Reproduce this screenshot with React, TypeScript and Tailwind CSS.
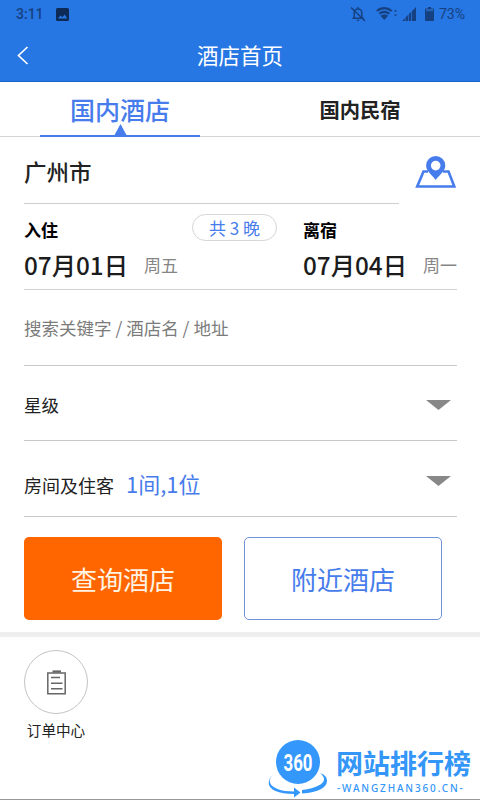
import React, { useState } from 'react';

const StatusBar: React.FC = () => (
  <div className="flex h-7 items-center pl-4 pr-[15px] text-[#164180]">
    <span className="w-[40px] font-[Roboto] text-[14px] font-medium leading-7">3:11</span>
    <svg className="h-[13px] w-[13px]" viewBox="0 0 13 13">
      <rect width="13" height="13" rx="1.5" fill="#0c2a55" />
      <path d="M2 10.5 4.5 7.5 6.3 9.3 8.7 6.5 11.2 10.5Z" fill="#2676e3" />
    </svg>
    <div className="flex-1" />
    <svg className="mr-[10px] h-4 w-4" viewBox="0 0 16 16" fill="none" stroke="currentColor" strokeWidth="1.5">
      <path d="M4.2 12V6.8a3.8 3.8 0 0 1 7.6 0V12M2.5 12.2h11.2M8 1v2" />
      <path d="M1 1.5 15 15" />
      <path d="M6.6 13.8h2.8a1.4 1.4 0 0 1-2.8 0Z" fill="currentColor" stroke="none" />
    </svg>
    <svg className="mr-[4px] h-4 w-[22px]" viewBox="0 0 22 16" fill="none" stroke="currentColor">
      <path d="M.9 5a11 11 0 0 1 14.8 0M3.3 7.8a7.5 7.5 0 0 1 10 0" strokeWidth="2.1" />
      <path d="M4.5 9.8a5.5 5.5 0 0 1 7.6 0L8.3 14Z" fill="currentColor" stroke="none" />
      <path d="M19.5 3.5 21 5.5h-3ZM19.5 10.500 18 8.500h3Z" fill="currentColor" stroke="none" />
    </svg>
    <svg className="mr-[9px] h-[14px] w-[14px]" viewBox="0 0 14 14" fill="currentColor">
      <path d="M0 14 2.800 11.200V14ZM3.500 10.500 6 8V14H3.500ZM6.700 7.300 9 5V14H6.700ZM9.800 4.200 14 0V14H9.800Z" />
    </svg>
    <svg className="mr-[5px] h-[14px] w-[9px]" viewBox="0 0 9 14">
      <path d="M3 0h3v1.500h2.300q.7 0 .7.700v11.100q0 .7-.7.700H.7q-.7 0-.7-.7V2.200q0-.7.7-.7H3Z" fill="#164180" />
      <path d="M1 2h7v2.300H1Z" fill="#2664b8" />
    </svg>
    <span className="font-[Roboto] text-[14px] leading-7">73%</span>
  </div>
);

const DownArrow: React.FC = () => (
  <svg className="mr-[6px] h-[10px] w-[25px]" viewBox="0 0 25 10">
    <path d="M0 0h25L12.500 10Z" fill="#888888" />
  </svg>
);

interface StayDateProps {
  label: string;
  date: string;
  weekday: string;
}

const StayDate: React.FC<StayDateProps> = ({ label, date, weekday }) => (
  <div className="flex flex-col">
    <span className="h-6 text-[17px] font-bold leading-6 text-black">{label}</span>
    <div className="mt-[5px] flex h-9 items-center whitespace-nowrap">
      <span className="w-[120px] text-[24.3px] font-medium leading-9 text-[#1c1c1c]">{date}</span>
      <span className="text-[17px] leading-9 text-[#858585]">{weekday}</span>
    </div>
  </div>
);

const SiteLogo: React.FC = () => (
  <div className="absolute left-[268px] top-[739px] flex text-[#3496f8]">
    <svg className="h-[60px] w-[60px]" viewBox="0 0 60 60">
      <circle cx="30" cy="23" r="22" fill="#3397fc" />
      <text x="30" y="31.500" textAnchor="middle" textLength="29" lengthAdjust="spacingAndGlyphs" fontFamily="Roboto" fontWeight="700" fontSize="23" fill="#fff">360</text>
      <path d="M7 34C-2 40 0 49 17 52L26 52.500V48.500L32.500 53.500 26 58.500V55C9 55-1 50 1 42Q2 37 7 34Z" fill="#3397fc" />
      <path d="M52 34C61 41 55 48 34 51V54.500C54 53 62 46 58 38Q56 35 52 34Z" fill="#3397fc" />
    </svg>
    <div className="ml-[8px] flex flex-col whitespace-nowrap">
      <span className="mt-[5px] h-[37px] text-[27px] font-bold leading-[37px]">网站排行榜</span>
      <span className="ml-[1px] h-[14px] font-['Noto_Sans'] text-[10px] font-medium leading-[14px] tracking-[1.85px]">-WANGZHAN360.CN-</span>
    </div>
  </div>
);

export default function App() {
  const [tab, setTab] = useState('hotel');

  return (
    <div className="relative flex h-[800px] w-[480px] flex-col overflow-hidden bg-white font-['Noto_Sans_CJK_SC',sans-serif] text-[#222]">
      <header className="h-[82px] border-b border-[#1c64c8] bg-[#2676e3]">
        <StatusBar />
        <div className="flex h-[54px] items-center">
          <svg className="ml-[17px] h-[19px] w-[12px]" viewBox="0 0 12 19" fill="none" stroke="#fff" strokeWidth="1.700">
            <path d="M10.500 1 1.500 9.500 10.500 18" />
          </svg>
          <h1 className="mr-[29px] flex-1 text-center text-[21.500px] leading-[54px] text-white">酒店首页</h1>
        </div>
      </header>

      <nav className="flex h-[55px] border-b border-[#d5d5d5]">
        <button onClick={() => setTab('hotel')} className="relative w-[240px] text-[25px] font-medium leading-[54px] text-[#477cec]">
          国内酒店
          {tab === 'hotel' && (
            <svg className="absolute left-[40px] top-[42px] h-[13px] w-[160px]" viewBox="0 0 160 13" fill="#477cec">
              <path d="M80.500 0 87 12H74ZM0 11h160v2H0Z" />
            </svg>
          )}
        </button>
        <button onClick={() => setTab('homestay')} className="w-[240px] text-[20.300px] font-bold leading-[54px]">
          国内民宿
        </button>
      </nav>

      <main className="flex flex-col pl-6 pr-[23px]">
        <div className="flex h-[67px]">
          <div className="h-[67px] w-[385px] border-b border-[#cfcfd3] text-[22.500px] font-medium leading-[68px]">广州市</div>
          <svg className="ml-[16px] mt-[19px] h-[33px] w-[42px] shrink-0" viewBox="0 0 42 33">
            <path d="M13 15.500H8.500L2.200 30.500H39.300L33.500 15.500H28" fill="none" stroke="#477cec" strokeWidth="2.600" />
            <path fillRule="evenodd" d="M20.700 0a9.600 9.600 0 0 1 9.600 9.600c0 5.500-5 8.500-9.600 14.400-4.600-5.900-9.600-8.900-9.600-14.400A9.600 9.600 0 0 1 20.700 0Zm0 4.800a4.800 4.800 0 1 0 0 9.600 4.800 4.800 0 0 0 0-9.600Z" fill="#477cec" />
          </svg>
        </div>

        <div className="flex h-[86px] border-b border-[#d2d2d2] pt-[14px]">
          <div className="w-[168px]">
            <StayDate label="入住" date="07月01日" weekday="周五" />
          </div>
          <div className="-mt-[4px] mr-[26px] h-[27px] w-[85px] rounded-full border border-[#d5d5da] text-center text-[17px] leading-[26px] text-[#477cec]">
            共 3 晚
          </div>
          <StayDate label="离宿" date="07月04日" weekday="周一" />
        </div>

        <div className="h-[76px] border-b border-[#c9c9c9] text-[17.500px] leading-[75px] text-[#7b7b7b]">搜索关键字 / 酒店名 / 地址</div>

        <div className="flex h-[75px] items-center justify-between border-b border-[#c9c9c9] pt-[4px]">
          <span className="text-[17.500px]">星级</span>
          <DownArrow />
        </div>

        <div className="flex h-[76px] items-center border-b border-[#c9c9c9] pt-[4px]">
          <span className="mt-[9px] text-[18px]">房间及住客</span>
          <span className="ml-[12px] mt-[5px] flex-1 text-[22px] text-[#477cec]">1间,1位</span>
          <DownArrow />
        </div>

        <div className="mt-[20px] flex gap-[22px]">
          <button className="h-[83px] w-[198px] rounded-[5px] bg-[#ff6600] text-[26px] text-[#fff3e3]">查询酒店</button>
          <button className="h-[83px] w-[198px] rounded-[5px] border border-[#6f92d8] text-[26px] text-[#477cec]">附近酒店</button>
        </div>
      </main>

      <div className="mt-[12px] h-[5px] shrink-0 bg-[#eeeeee]" />

      <section className="flex flex-1 flex-col border-b border-[#999] pl-6 pt-[13px]">
        <div className="flex w-16 flex-col items-center">
          <div className="flex h-16 w-16 items-center justify-center rounded-full border border-[#c4c4c4]">
            <svg className="h-[25px] w-[19px]" viewBox="0 0 19 25" fill="none" stroke="#666">
              <path d="M.8 3h17.400v20.800H.8Z" strokeWidth="1.500" />
              <path d="M5.500 1.500h8.500" strokeWidth="2.200" />
              <path d="M4 7.500h9M4 13.300h11.500M4 18.800h11.500" strokeWidth="1.400" />
            </svg>
          </div>
          <span className="mt-[5px] whitespace-nowrap text-[14.600px] leading-[22px]">订单中心</span>
        </div>
      </section>

      <SiteLogo />
    </div>
  );
}
